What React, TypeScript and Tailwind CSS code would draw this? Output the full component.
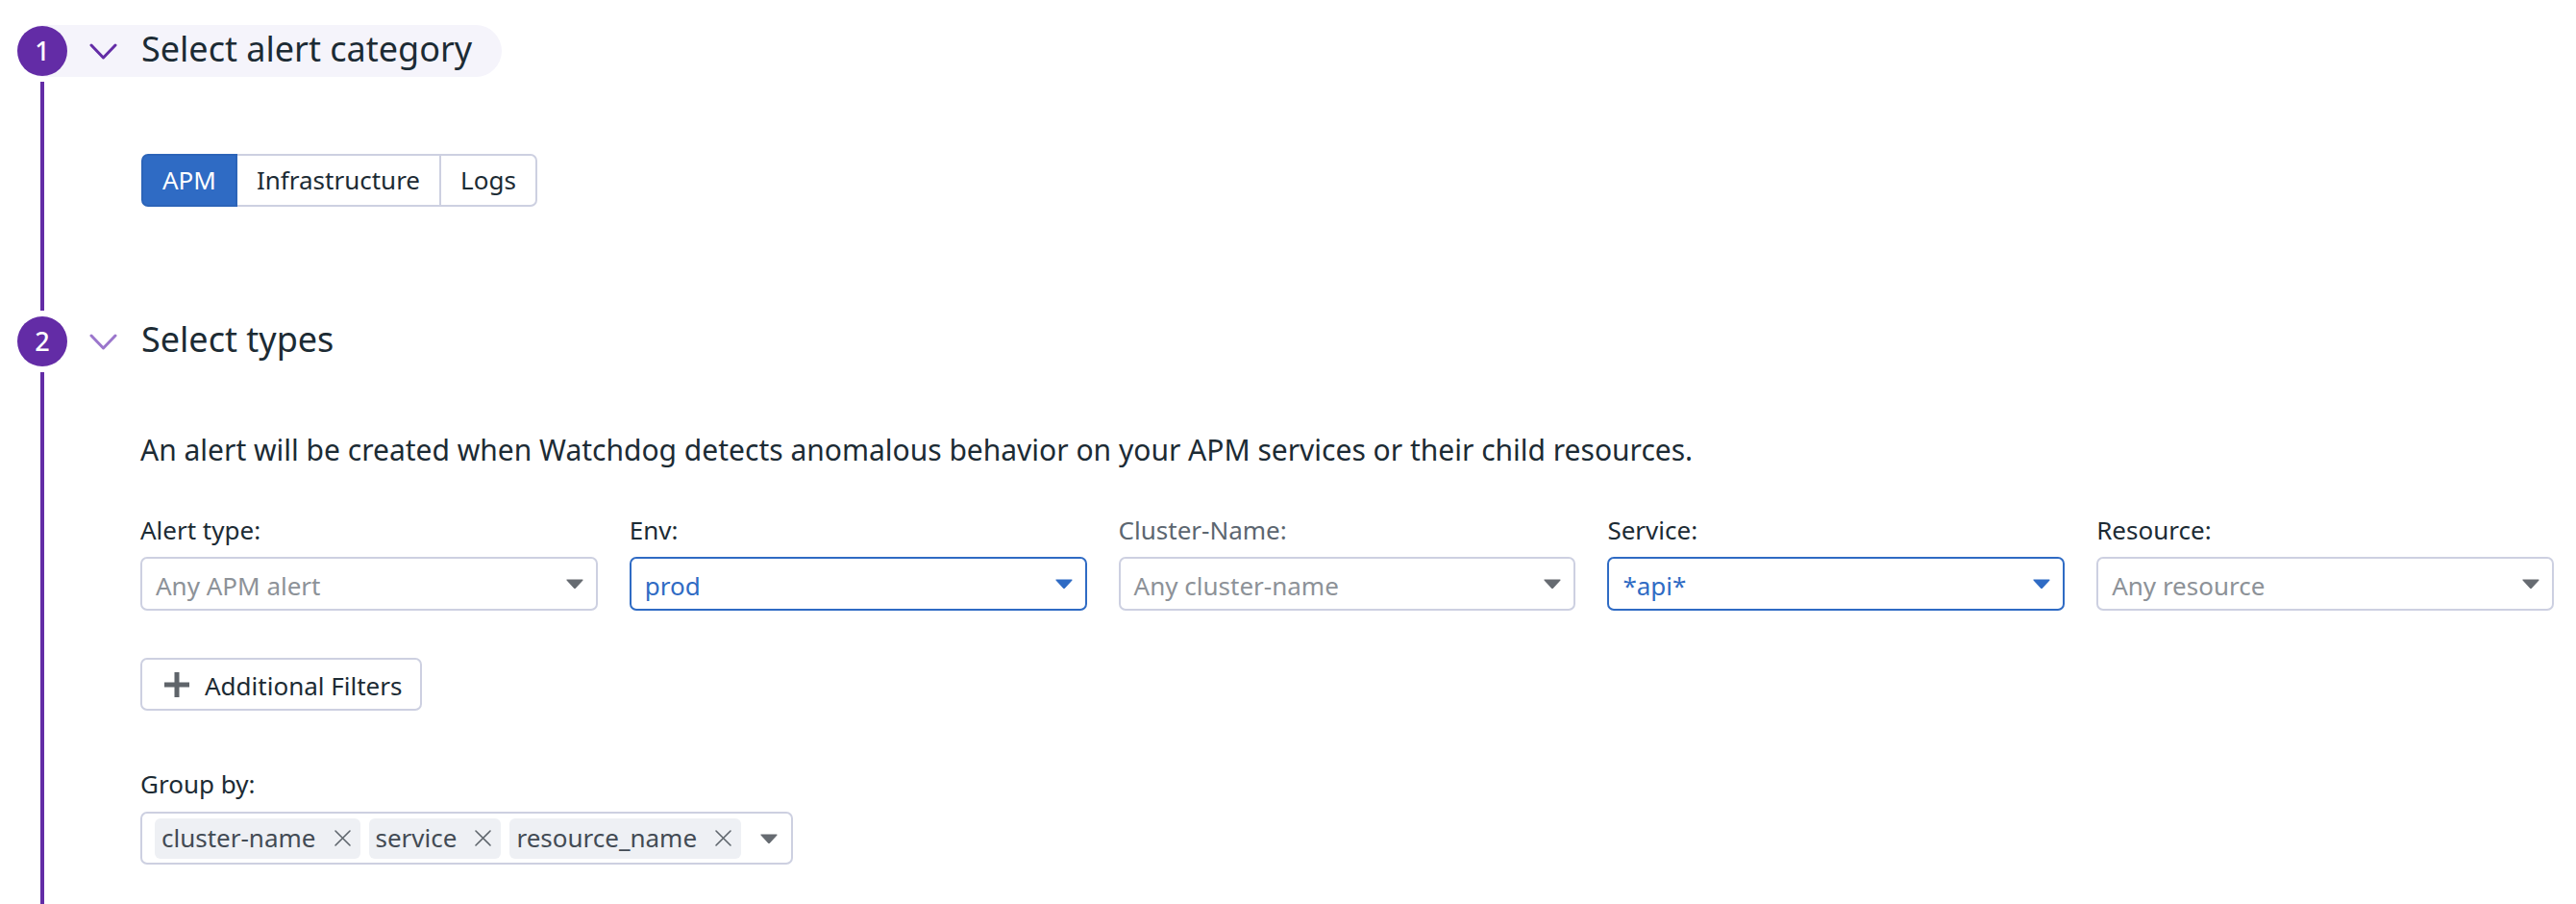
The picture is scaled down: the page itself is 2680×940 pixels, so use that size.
import React from 'react'

const purple = '#632ca6'

function StepCircle({ n }: { n: number }) {
  return (
    <div className="flex h-[52px] w-[52px] shrink-0 items-center justify-center rounded-full bg-[#632ca6] text-[27px] font-medium text-white">
      {n}
    </div>
  )
}

function Chevron({ light }: { light?: boolean }) {
  return (
    <svg width="29" height="17" viewBox="0 0 29 17" className="shrink-0">
      <path
        d="M2 2 L14.5 15 L27 2"
        fill="none"
        stroke={light ? '#9b76cc' : purple}
        strokeWidth="3"
        strokeLinecap="round"
        strokeLinejoin="round"
      />
    </svg>
  )
}

function Caret({ color }: { color: string }) {
  return (
    <svg width="18" height="10" viewBox="0 0 18 10" className="shrink-0">
      <path d="M1 1 L17 1 L9.6 9.2 Q9 9.8 8.4 9.2 Z" fill={color} stroke={color} strokeWidth="1.2" strokeLinejoin="round" />
    </svg>
  )
}

function Rail({ last }: { last?: boolean }) {
  return (
    <div className={`flex w-[52px] shrink-0 justify-center pt-[5px] ${last ? '' : 'pb-[5px]'}`}>
      <div className="w-[4px] bg-[#632ca6]" />
    </div>
  )
}

type Field = { label: string; value: string; active?: boolean; mutedLabel?: boolean }

const fields: Field[] = [
  { label: 'Alert type:', value: 'Any APM alert' },
  { label: 'Env:', value: 'prod', active: true },
  { label: 'Cluster-Name:', value: 'Any cluster-name', mutedLabel: true },
  { label: 'Service:', value: '*api*', active: true },
  { label: 'Resource:', value: 'Any resource' },
]

function SelectField({ f }: { f: Field }) {
  return (
    <div className="flex flex-col">
      <div className={`text-[26px] leading-[34px] ${f.mutedLabel ? 'text-[#5c6670]' : 'text-[#1c2b34]'}`}>{f.label}</div>
      <div
        className={`mt-[11px] flex h-[56px] items-center justify-between rounded-[7px] border-2 pl-[14px] pr-[13px] ${
          f.active ? 'border-[#2f6bc4]' : 'border-[#cdd0e1]'
        }`}
      >
        <span className={`pt-[5px] text-[26px] ${f.active ? 'text-[#2f6bc4]' : 'text-[#8d9298]'}`}>{f.value}</span>
        <Caret color={f.active ? '#2f6bc4' : '#666b71'} />
      </div>
    </div>
  )
}

function Chip({ text }: { text: string }) {
  return (
    <div className="flex h-[42px] items-center rounded-[6px] bg-[#eef0f4] pl-[7px] pr-[9px]">
      <span className="text-[26px] text-[#434b54]">{text}</span>
      <svg width="19" height="19" viewBox="0 0 19 19" className="ml-[18px] shrink-0">
        <path d="M2 2 L17 17 M17 2 L2 17" stroke="#5f666d" strokeWidth="1.6" strokeLinecap="round" />
      </svg>
    </div>
  )
}

export default function App() {
  return (
    <div className="min-h-screen bg-white pl-[18px] pr-[23px] pt-[26px] font-['Noto_Sans',sans-serif] text-[#1c2b34]">
      {/* step 1 */}
      <div className="inline-flex h-[54px] items-center rounded-full bg-[#f5f4fb] pr-[31px]">
        <StepCircle n={1} />
        <div className="ml-[23px]">
          <Chevron />
        </div>
        <h2 className="ml-[25px] pb-[4px] text-[36px] leading-none">Select alert category</h2>
      </div>
      <div className="flex">
        <Rail />
        <div className="ml-[77px] pb-[113px] pt-[80px]">
          <div className="flex h-[55px] text-[26px]">
            <button className="rounded-l-[7px] border-2 border-[#2c64b8] bg-[#2f6bc4] px-[20px] text-white">APM</button>
            <button className="border-y-2 border-[#cdd0e1] bg-white px-[20px] text-[#1c2b34]">Infrastructure</button>
            <button className="rounded-r-[7px] border-2 border-[#cdd0e1] bg-white px-[20px] text-[#1c2b34]">Logs</button>
          </div>
        </div>
      </div>

      {/* step 2 */}
      <div className="flex h-[54px] items-center">
        <StepCircle n={2} />
        <div className="ml-[23px]">
          <Chevron light />
        </div>
        <h2 className="ml-[25px] pb-[4px] text-[36px] leading-none">Select types</h2>
      </div>
      <div className="flex">
        <Rail last />
        <div className="ml-[76px] flex-1 pb-[60px] pt-[65px]">
          <p className="text-[30px] leading-[41px]">
            An alert will be created when Watchdog detects anomalous behavior on your APM services or their child resources.
          </p>
          <div className="mt-[46px] grid grid-cols-5 gap-x-[33px]">
            {fields.map((f) => (
              <SelectField key={f.label} f={f} />
            ))}
          </div>
          <button className="mt-[49px] flex h-[55px] items-center rounded-[7px] border-2 border-[#cdd0e1] bg-white pl-[22px] pr-[19px] text-[26px]">
            <svg width="28" height="28" viewBox="0 0 28 28" className="shrink-0">
              <path d="M14 1 V27 M1 14 H27" stroke="#5f646a" strokeWidth="5" />
            </svg>
            <span className="ml-[15px] pt-[3px]">Additional Filters</span>
          </button>
          <div className="mt-[59px] text-[26px] leading-[34px]">Group by:</div>
          <div className="mt-[12px] inline-flex h-[55px] items-center rounded-[7px] border-2 border-[#cdd0e1] pl-[13px] pr-[14px]">
            <div className="flex gap-[9px]">
              <Chip text="cluster-name" />
              <Chip text="service" />
              <Chip text="resource_name" />
            </div>
            <div className="ml-[20px]">
              <Caret color="#666b71" />
            </div>
          </div>
        </div>
      </div>
    </div>
  )
}
